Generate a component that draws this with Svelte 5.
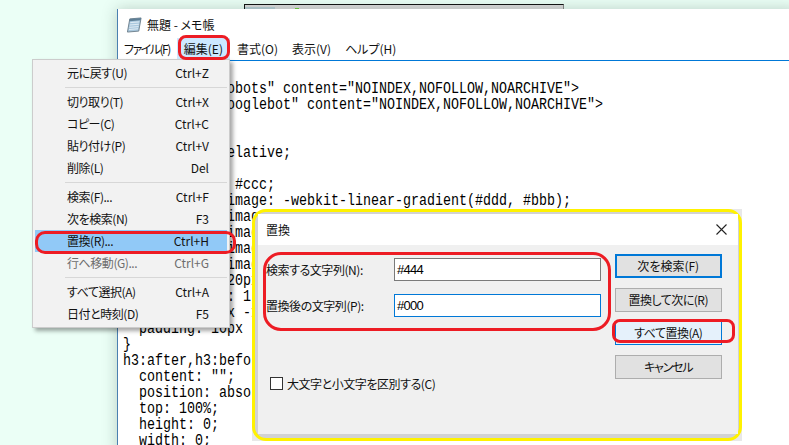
<script>
  const menus = ['ファイル(F)', '編集(E)', '書式(O)', '表示(V)', 'ヘルプ(H)'];

  const items = [
    { label: '元に戻す(U)', key: 'Ctrl+Z' },
    { sep: true },
    { label: '切り取り(T)', key: 'Ctrl+X' },
    { label: 'コピー(C)', key: 'Ctrl+C' },
    { label: '貼り付け(P)', key: 'Ctrl+V' },
    { label: '削除(L)', key: 'Del' },
    { sep: true },
    { label: '検索(F)...', key: 'Ctrl+F' },
    { label: '次を検索(N)', key: 'F3' },
    { label: '置換(R)...', key: 'Ctrl+H', active: true },
    { label: '行へ移動(G)...', key: 'Ctrl+G', disabled: true },
    { sep: true },
    { label: 'すべて選択(A)', key: 'Ctrl+A' },
    { label: '日付と時刻(D)', key: 'F5' }
  ];

  const buttons = [
    { label: '次を検索(F)', kind: 'default' },
    { label: '置換して次に(R)', kind: '' },
    { label: 'すべて置換(A)', kind: 'hover' },
    { label: 'キャンセル', kind: 'cancel' }
  ];

  const code = [
    '<meta name="robots" content="NOINDEX,NOFOLLOW,NOARCHIVE">',
    '<meta name="googlebot" content="NOINDEX,NOFOLLOW,NOARCHIVE">',
    '',
    'h3 {',
    '  position: relative;',
    '  color: #444;',
    '  background: #ccc;',
    '  background-image: -webkit-linear-gradient(#ddd, #bbb);',
    '  background-image: -moz-linear-gradient(#ddd, #bbb);',
    '  background-image: -ms-linear-gradient(#ddd, #bbb);',
    '  background-image: -o-linear-gradient(#ddd, #bbb);',
    '  background-image: linear-gradient(#ddd, #bbb);',
    '  font-size: 20px;',
    '  line-height: 1.5;',
    '  margin: 10px -10px;',
    '  padding: 10px',
    '}',
    'h3:after,h3:before {',
    '  content: "";',
    '  position: absolute;',
    '  top: 100%;',
    '  height: 0;',
    '  width: 0;'
  ];
</script>

<div class="desktop">
  <div class="back-window">
    <span class="back-tab"></span>
    <span class="back-green"></span>
  </div>

  <div class="notepad">
    <div class="titlebar">
      <svg class="pad-icon" width="17" height="16" viewBox="0 0 18 17">
        <path d="M4 2 L16 1 L13.5 15 L1.5 16 Z" fill="#a9c8de" stroke="#6d7f8c" stroke-width="1" />
        <path d="M4.5 6 L14 5.2 M4 8.5 L13.6 7.7 M3.6 11 L13.2 10.2 M3.2 13.3 L12.8 12.5" stroke="#e4eef5" stroke-width="1" />
        <path d="M4 2 L16 1 L15.5 3.5 L3.6 4.5 Z" fill="#5f7f96" />
      </svg>
      <span>無題 - メモ帳</span>
    </div>
    <div class="menubar">
      {#each menus as m, i}
        <span class="menu" class:open={i === 1}>{m}</span>
      {/each}
    </div>
    <div class="editor">
      {#each code as line}
        {#if line === '  color: #444;'}
          <div class="line">  color: <span class="sel">#444;</span></div>
        {:else}
          <div class="line">{line}</div>
        {/if}
      {/each}
    </div>
  </div>

  <div class="dropdown">
    {#each items as item}
      {#if item.sep}
        <div class="sep"></div>
      {:else}
        <div class="item" class:active={item.active} class:disabled={item.disabled}>
          <span class="item-label">{item.label}</span>
          <span>{item.key}</span>
        </div>
      {/if}
    {/each}
  </div>

  <div class="shot">
    <div class="frame">
      <div class="dialog">
        <div class="dialog-title">
          <span>置換</span>
          <svg width="11" height="11" viewBox="0 0 11 11">
            <path d="M0.5 0.5 L10.5 10.5 M10.5 0.5 L0.5 10.5" stroke="#222" stroke-width="1.1" />
          </svg>
        </div>
        <div class="dialog-body">
          <div class="form">
            <div class="field">
              <span class="tight">検索する文字列(N):</span>
              <div class="input">#444</div>
            </div>
            <div class="field">
              <span class="tight">置換後の文字列(P):</span>
              <div class="input focus">#000</div>
            </div>
            <label class="check">
              <span class="box"></span>
              <span class="tight">大文字と小文字を区別する(C)</span>
            </label>
          </div>
          <div class="actions">
            {#each buttons as b}
              <div class="btn {b.kind}">{b.label}</div>
            {/each}
          </div>
        </div>
      </div>
    </div>
  </div>

  <div class="mark mark-menu"></div>
  <div class="mark mark-item"></div>
  <div class="mark mark-form"></div>
  <div class="mark mark-btn"></div>
</div>

<style>
  :global(body) {
    margin: 0;
  }

  .desktop {
    position: relative;
    width: 789px;
    height: 445px;
    overflow: hidden;
    background: #ebfff6;
    font-family: "Noto Sans CJK JP", "Noto Sans", sans-serif;
    font-size: 12px;
    font-feature-settings: "palt";
    color: #111;
  }

  .back-window {
    position: absolute;
    left: 244px;
    top: 4px;
    width: 320px;
    height: 8px;
    display: flex;
    gap: 20px;
    box-sizing: border-box;
    background: #dcdcdc;
    border-top: 1px solid #111;
    border-left: 1px solid #111;
    border-right: 1px solid #888;
  }

  .back-tab {
    width: 30px;
    height: 4px;
    margin-top: 2px;
    background: #b9cfd6;
  }

  .back-green {
    width: 4px;
    height: 3px;
    margin-top: 3px;
    background: #6fd13c;
  }

  .notepad {
    position: absolute;
    left: 117px;
    top: 9px;
    width: 680px;
    height: 445px;
    background: #fff;
    border-left: 1px solid #4a7fb0;
    box-sizing: border-box;
    box-shadow: 0 0 14px rgba(40, 60, 50, 0.25);
  }

  .titlebar {
    height: 29px;
    display: flex;
    align-items: center;
    gap: 4px;
    padding: 3px 0 0 8px;
    box-sizing: border-box;
    font-size: 12px;
    line-height: 1;
  }

  .menubar {
    height: 22px;
    display: flex;
    align-items: center;
    border-bottom: 1px solid #0078d7;
  }

  .menu {
    padding: 0 7px;
    height: 22px;
    line-height: 22px;
    box-sizing: border-box;
  }

  .menu:first-child {
    padding-left: 6px;
    letter-spacing: -1.5px;
  }

  .menu.open {
    background: #cce8ff;
  }

  .editor {
    padding: 20px 0 0 6px;
    font-family: "Liberation Mono", monospace;
    font-size: 16px;
    line-height: 16px;
    color: #000;
    font-feature-settings: normal;
    transform: scaleX(0.8333);
    transform-origin: 0 0;
    width: 900px;
  }

  .line {
    height: 16px;
    white-space: pre;
  }

  .sel {
    background: #3399ff;
    color: #fff;
  }

  .dropdown {
    position: absolute;
    left: 32px;
    top: 59px;
    width: 198px;
    box-sizing: border-box;
    padding: 2px;
    background: #f2f2f2;
    border: 1px solid #ccc;
    box-shadow: 3px 3px 4px rgba(0, 0, 0, 0.35);
  }

  .item {
    height: 22px;
    display: flex;
    justify-content: space-between;
    align-items: center;
    padding: 0 18px 2px 32px;
    box-sizing: border-box;
  }

  .item-label {
    letter-spacing: -0.45px;
  }

  .item.active {
    background: #91c9f7;
  }

  .item.disabled {
    color: #6d6d6d;
  }

  .sep {
    height: 1px;
    margin: 3px 0 3px 30px;
    background: #d7d7d7;
  }

  .shot {
    position: absolute;
    left: 252px;
    top: 209px;
    width: 490px;
    height: 232px;
    background: #e8e8e8;
    border-radius: 14px 0 0 0;
  }

  .frame {
    height: 100%;
    box-sizing: border-box;
    padding: 2px 1px 4px 3px;
    border: 3px solid #fff200;
    border-radius: 14px;
    background: #d2d2d2;
  }

  .dialog {
    height: 100%;
    display: flex;
    flex-direction: column;
    background: #f0f0f0;
  }

  .dialog-title {
    height: 31px;
    flex: none;
    display: flex;
    align-items: center;
    justify-content: space-between;
    padding: 0 11px 0 8px;
    background: #fff;
  }

  .dialog-body {
    flex: 1;
    display: flex;
    justify-content: space-between;
    padding: 9px 16px 0 8px;
  }

  .form {
    width: 335px;
    display: flex;
    flex-direction: column;
    gap: 13px;
    padding-top: 4px;
  }

  .field {
    display: flex;
    justify-content: space-between;
    align-items: center;
    white-space: nowrap;
  }

  .tight {
    letter-spacing: -0.45px;
  }

  .input {
    width: 207px;
    height: 23px;
    box-sizing: border-box;
    border: 1px solid #7a7a7a;
    background: #fff;
    padding-left: 2px;
    line-height: 21px;
    font-family: "Liberation Sans", sans-serif;
    font-size: 13px;
    letter-spacing: -0.7px;
    color: #000;
  }

  .input.focus {
    border-color: #0078d7;
  }

  .check {
    display: flex;
    align-items: center;
    gap: 4px;
    margin: 45px 0 0 4px;
  }

  .box {
    width: 13px;
    height: 13px;
    box-sizing: border-box;
    border: 1px solid #333;
    background: #fff;
  }

  .actions {
    width: 107.5px;
    display: flex;
    flex-direction: column;
    gap: 9.67px;
  }

  .btn {
    height: 24px;
    box-sizing: border-box;
    border: 1px solid #adadad;
    background: #e1e1e1;
    text-align: center;
    line-height: 22px;
    letter-spacing: -0.5px;
  }

  .btn.default {
    border: 2px solid #0078d7;
    line-height: 20px;
    letter-spacing: 0;
  }

  .btn.hover {
    border-color: #0078d7;
    background: #e5f1fb;
  }

  .btn.cancel {
    letter-spacing: -1.2px;
  }

  .mark {
    position: absolute;
    box-sizing: border-box;
    border: 3px solid #ed1c24;
    pointer-events: none;
  }

  .mark-menu {
    left: 178px;
    top: 35px;
    width: 52px;
    height: 25px;
    border-radius: 8px;
  }

  .mark-item {
    left: 35px;
    top: 231px;
    width: 201px;
    height: 23px;
    border-radius: 10px;
  }

  .mark-form {
    left: 263px;
    top: 252px;
    width: 348px;
    height: 79px;
    border-radius: 18px;
  }

  .mark-btn {
    left: 612px;
    top: 319px;
    width: 123px;
    height: 24px;
    border-radius: 8px;
  }
</style>
